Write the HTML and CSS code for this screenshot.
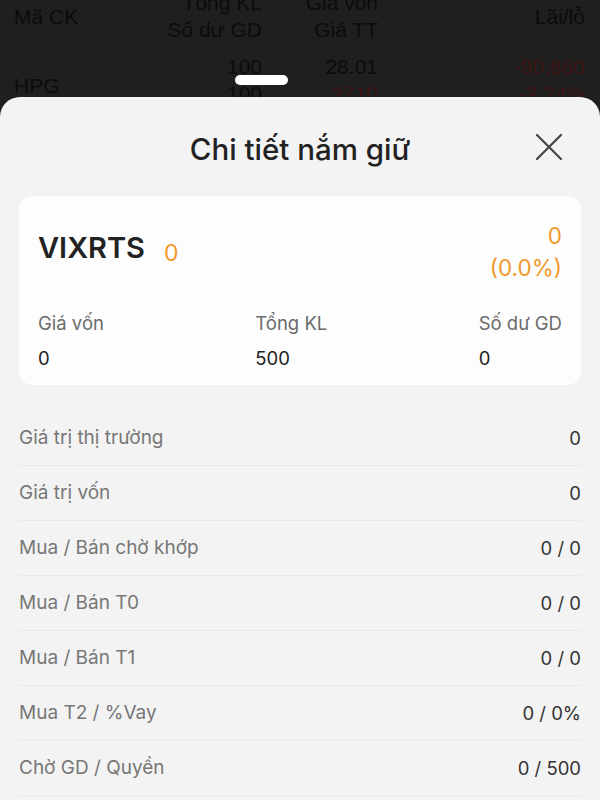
FILE: index.html
```html
<!DOCTYPE html>
<html lang="vi">
<head>
<meta charset="utf-8" />
<meta name="viewport" content="width=600" />
<title>Chi tiết nắm giữ</title>
<link rel="stylesheet" href="styles.css">
</head>
<body>
<section class="backdrop">
  <div class="trow head">
    <div class="col c1 mid">Mã CK</div>
    <div class="col c2">Tổng KL<br>Số dư GD</div>
    <div class="col c3">Giá vốn<br>Giá TT</div>
    <div class="col c4 mid">Lãi/lỗ</div>
  </div>
  <div class="trow data">
    <div class="col c1 sym">HPG</div>
    <div class="col c2">100<br>100</div>
    <div class="col c3">28.01<br><span class="down">2710</span></div>
    <div class="col c4 down">-90,860<br>-3.24%</div>
  </div>
</section>

<div class="handle"></div>

<section class="sheet">
  <header class="sheet-head">
    <h1>Chi tiết nắm giữ</h1>
    <button class="close" aria-label="Đóng">
      <svg width="28" height="28" viewBox="0 0 28 28"><path d="M2 2 L26 26 M26 2 L2 26" stroke="#444" stroke-width="2.2" stroke-linecap="round" fill="none"/></svg>
    </button>
  </header>

  <article class="card">
    <div class="card-top">
      <div class="ticker">
        <span class="sym-big">VIXRTS</span>
        <span class="price">0</span>
      </div>
      <div class="change">0<br>(0.0%)</div>
    </div>
    <div class="stats">
      <div class="stat"><p class="label">Giá vốn</p><p class="val">0</p></div>
      <div class="stat"><p class="label">Tổng KL</p><p class="val">500</p></div>
      <div class="stat"><p class="label">Số dư GD</p><p class="val">0</p></div>
    </div>
  </article>

  <ul class="details">
    <li><span>Giá trị thị trường</span><b>0</b></li>
    <li><span>Giá trị vốn</span><b>0</b></li>
    <li><span>Mua / Bán chờ khớp</span><b>0 / 0</b></li>
    <li><span>Mua / Bán T0</span><b>0 / 0</b></li>
    <li><span>Mua / Bán T1</span><b>0 / 0</b></li>
    <li><span>Mua T2 / %Vay</span><b>0 / 0%</b></li>
    <li><span>Chờ GD / Quyền</span><b>0 / 500</b></li>
  </ul>
</section>
</body>
</html>
```

FILE: styles.css
```css
html, body {
  margin: 0;
  padding: 0;
  height: 100%;
  overflow: hidden;
}

body {
  background: #1f1f1f;
  font: normal 19px/1.3 Inter, "Noto Sans", sans-serif;
}

/* holdings table behind the sheet, dimmed */
.backdrop {
  margin-top: -11px;
  font: normal 21px/27px "Liberation Sans", Arial, sans-serif;
  color: #000;
  opacity: 0.6;
}

.trow {
  display: flex;
}

.trow.head {
  height: 54px;
}

.trow.data {
  margin-top: 10px;
}

.col {
  text-align: right;
  white-space: nowrap;
}

.c1 {
  width: 130px;
  padding-left: 14px;
  box-sizing: border-box;
  text-align: left;
}

.c2 { width: 132px; }
.c3 { width: 116px; }
.c4 { width: 207px; }

.mid {
  align-self: center;
}

.sym {
  margin-top: 19px;
}

.down {
  color: #4f0d0d;
}

.handle {
  position: absolute;
  z-index: 2;
  left: 235px;
  top: 75px;
  width: 53px;
  height: 10px;
  border-radius: 5px;
  background: #fff;
}

/* bottom sheet */
.sheet {
  position: absolute;
  z-index: 3;
  left: 0;
  right: 0;
  top: 97px;
  bottom: 0;
  background: #f3f3f3;
  border-radius: 20px 20px 0 0;
  padding: 0 19px;
}

.sheet-head {
  height: 99px;
  display: flex;
  align-items: center;
  justify-content: center;
  position: relative;
}

.sheet-head h1 {
  margin: 0;
  font-size: 29.5px;
  font-weight: 500;
  color: #222;
  padding-top: 6px;
}

.close {
  position: absolute;
  right: 18px;
  top: 36px;
  border: 0;
  background: none;
  padding: 0;
  width: 28px;
  height: 28px;
}

.card {
  background: #fdfdfd;
  border-radius: 14px;
  padding: 24px 19px 14px 19px;
  height: 151px;
}

.card-top {
  display: flex;
  justify-content: space-between;
  align-items: flex-start;
}

.ticker {
  display: flex;
  align-items: baseline;
  gap: 19px;
  padding-top: 9px;
}

.sym-big {
  font-size: 29px;
  font-weight: 600;
  color: #222;
}

.price {
  font-size: 23px;
  color: #f09a2c;
  position: relative;
  top: 3px;
}

.change {
  text-align: right;
  font-size: 22.5px;
  line-height: 32px;
  color: #f09a2c;
}

.stats {
  display: flex;
  justify-content: space-between;
  margin-top: 27px;
  font-size: 18.5px;
}

.stat p {
  margin: 0;
}

.stat .label {
  color: #6b6b6b;
  line-height: 24px;
}

.stat .val {
  color: #222;
  margin-top: 11px;
  line-height: 24px;
}

.details {
  list-style: none;
  margin: 26px 0 0 0;
  padding: 0;
}

.details li {
  height: 54px;
  display: flex;
  justify-content: space-between;
  align-items: center;
  border-bottom: 1px solid #e9e9e9;
}

.details span {
  color: #777;
}

.details b {
  font-weight: 400;
  font-size: 18.5px;
  color: #333;
}
```
